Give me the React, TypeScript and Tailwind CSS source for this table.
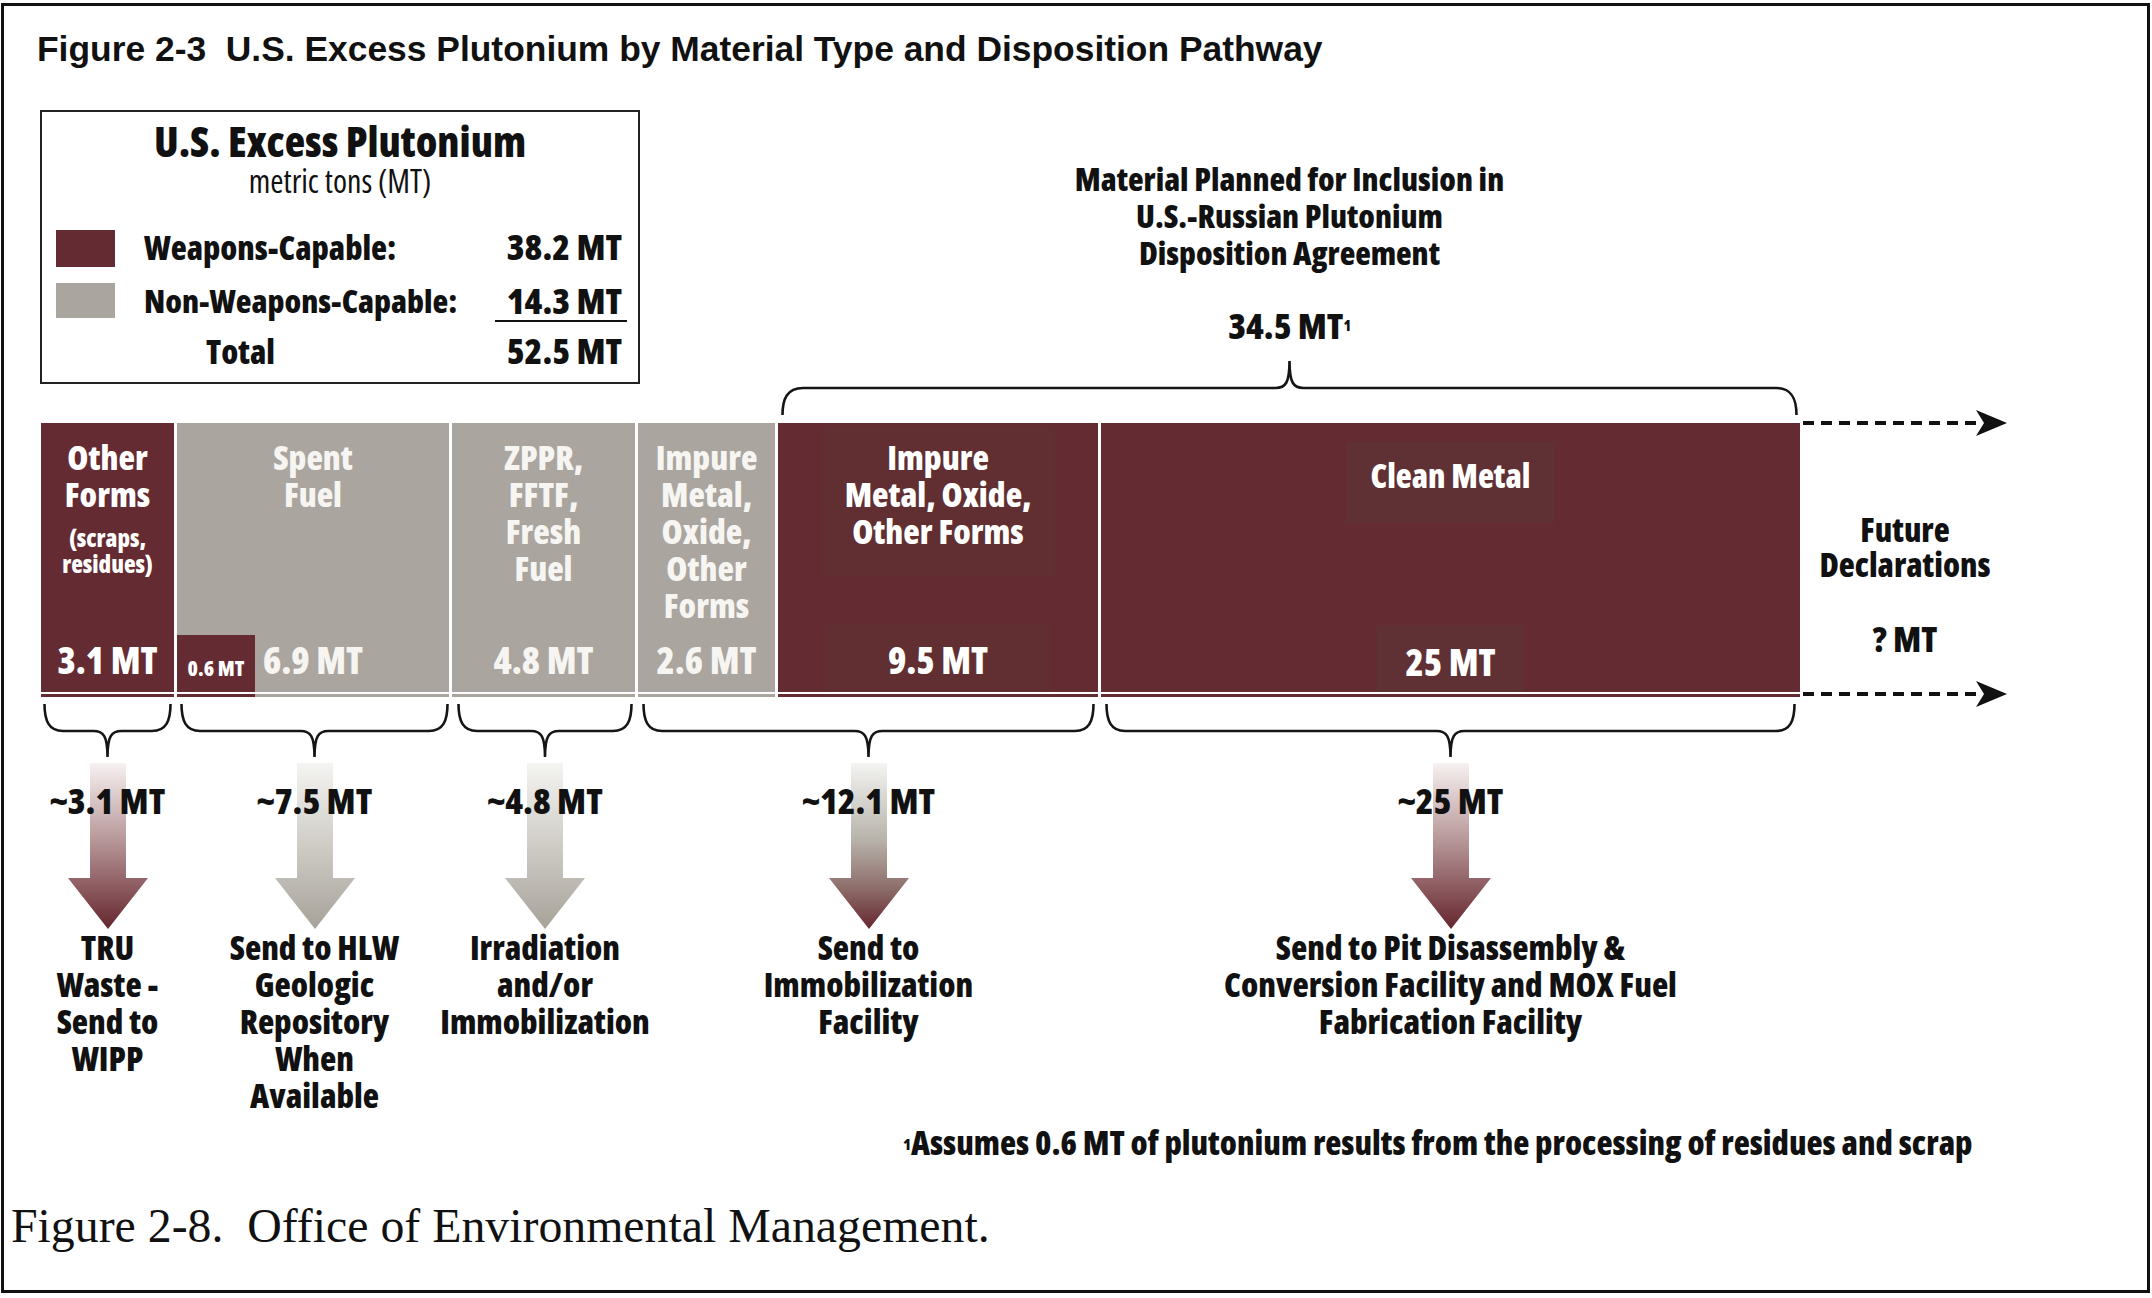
import React from "react";

const NF = "font-['Open_Sans','Noto_Sans',sans-serif] [font-stretch:75%]";
const N = "font-['Open_Sans','Noto_Sans',sans-serif] [font-stretch:75%] font-extrabold";

function BottomBrace({ w }: { w: number }) {
  const c = w / 2;
  const d = `M1.5,7 C1.5,24 6,34 20,34 L${c - 14},34 C${c - 4},34 ${c},39 ${c},60 C${c},39 ${c + 4},34 ${c + 14},34 L${w - 20},34 C${w - 6},34 ${w - 1.5},24 ${w - 1.5},7`;
  return (
    <svg width={w} height={66} className="block">
      <path d={d} fill="none" stroke="#151515" strokeWidth={2.6} />
    </svg>
  );
}

function TopBrace({ w }: { w: number }) {
  const c = w / 2;
  const d = `M1.5,58 C1.5,42 6,31 22,31 L${c - 14},31 C${c - 4},31 ${c},26 ${c},4 C${c},26 ${c + 4},31 ${c + 14},31 L${w - 22},31 C${w - 6},31 ${w - 1.5},42 ${w - 1.5},58`;
  return (
    <svg width={w} height={64} className="block">
      <path d={d} fill="none" stroke="#151515" strokeWidth={2.6} />
    </svg>
  );
}

function DownArrow({ id, stops }: { id: string; stops: [number, string][] }) {
  return (
    <svg width={80} height={166} className="block">
      <defs>
        <linearGradient id={id} x1="0" y1="0" x2="0" y2="1">
          {stops.map(([o, c]) => (
            <stop key={o} offset={o} stopColor={c} />
          ))}
        </linearGradient>
      </defs>
      <path d="M22,0 H58 V115 H80 L40,166 L0,115 H22 Z" fill={`url(#${id})`} />
    </svg>
  );
}

function DashArrow() {
  return (
    <svg width={204} height={30} className="block">
      <line x1={0} y1={15} x2={180} y2={15} stroke="#111" strokeWidth={4} strokeDasharray="11 7" />
      <path d="M204,15 L173,2 L181,15 L173,28 Z" fill="#111" />
    </svg>
  );
}

const maroonStops: [number, string][] = [
  [0, "#f7f1f1"],
  [0.45, "#b99a9c"],
  [1, "#66262e"],
];
const grayStops: [number, string][] = [
  [0, "#f4f4f2"],
  [0.5, "#cfccc6"],
  [1, "#a6a29a"],
];
const mixedStops: [number, string][] = [
  [0, "#f4f4f2"],
  [0.45, "#b9b5ad"],
  [0.75, "#8e6f6c"],
  [1, "#66262e"],
];

const columns = [
  { cls: "w-[129px]", w: 129, id: "a1", stops: maroonStops, amt: "~3.1 MT", lines: ["TRU", "Waste -", "Send to", "WIPP"] },
  { cls: "w-[269px] ml-[8px]", w: 269, id: "a2", stops: grayStops, amt: "~7.5 MT", lines: ["Send to HLW", "Geologic", "Repository", "When", "Available"] },
  { cls: "w-[176px] ml-[8px]", w: 176, id: "a3", stops: grayStops, amt: "~4.8 MT", lines: ["Irradiation", "and/or", "Immobilization"] },
  { cls: "w-[453px] ml-[9px]", w: 453, id: "a4", stops: mixedStops, amt: "~12.1 MT", lines: ["Send to", "Immobilization", "Facility"] },
  { cls: "w-[691px] ml-[10px]", w: 691, id: "a5", stops: maroonStops, amt: "~25 MT", lines: ["Send to Pit Disassembly &", "Conversion Facility and MOX Fuel", "Fabrication Facility"] },
];

export default function App() {
  return (
    <div className="w-[2152px] h-[1298px] bg-white overflow-hidden text-[#111]">
      <div className="ml-[1px] mt-[3px] w-[2149px] h-[1290px] border-[3px] border-[#111] flex flex-col">
        {/* Title */}
        <div className="h-[104px] pt-[23px] pl-[33px]">
          <div className="font-['Liberation_Sans',Arial,sans-serif] font-bold text-[35.4px] leading-[40px] whitespace-nowrap">
            Figure 2-3&nbsp; U.S. Excess Plutonium by Material Type and Disposition Pathway
          </div>
        </div>

        {/* Legend + top annotation */}
        <div className="flex h-[313px]">
          <div className="ml-[36px] w-[600px] h-[274px] border-2 border-[#222] flex flex-col">
            <div className={`${N} text-[42px] leading-[44px] text-center pt-[7px]`}>U.S. Excess Plutonium</div>
            <div className={`${NF} font-normal text-[32px] leading-[34px] text-center mt-[1px]`}>metric tons (MT)</div>
            <div className={`${N} mt-[24px] flex flex-col text-[33px]`}>
              <div className="flex items-center h-[52px]">
                <div className="shrink-0 ml-[14px] w-[59px] h-[37px] bg-[#652b32]" />
                <div className="ml-[29px] leading-[38px] whitespace-nowrap">Weapons-Capable:</div>
                <div className="shrink-0 ml-auto mr-[11px] w-[132px] text-right pr-[5px] text-[36px] leading-[38px] whitespace-nowrap border-b-2 border-transparent">38.2 MT</div>
              </div>
              <div className="flex items-center h-[52px]">
                <div className="shrink-0 ml-[14px] w-[59px] h-[35px] bg-[#aaa59f]" />
                <div className="ml-[29px] text-[32.4px] leading-[38px] whitespace-nowrap">Non-Weapons-Capable:</div>
                <div className="shrink-0 ml-auto mr-[11px] w-[132px] text-right pr-[5px] text-[36px] leading-[38px] whitespace-nowrap border-b-2 border-[#111] translate-y-[2px]">14.3 MT</div>
              </div>
              <div className="flex items-center h-[52px]">
                <div className="ml-[164px] leading-[38px]">Total</div>
                <div className="shrink-0 ml-auto mr-[11px] w-[132px] text-right pr-[5px] text-[36px] leading-[38px] whitespace-nowrap border-b-2 border-transparent">52.5 MT</div>
              </div>
            </div>
          </div>

          <div className="ml-[141px] w-[1017px] flex flex-col items-center">
            <div className={`${N} text-[32.2px] leading-[37px] text-center pt-[50px] whitespace-nowrap`}>
              <div>Material Planned for Inclusion in</div>
              <div>U.S.-Russian Plutonium</div>
              <div>Disposition Agreement</div>
            </div>
            <div className={`${N} text-[36px] leading-[37px] mt-[36px] whitespace-nowrap`}>
              34.5 MT<sup className="text-[15px] relative -top-[8px]">1</sup>
            </div>
            <div className="mt-[13px]">
              <TopBrace w={1017} />
            </div>
          </div>
        </div>

        {/* Bar */}
        <div className={`${N} flex gap-[3px] h-[274px] pl-[37px]`}>
          {/* Other Forms */}
          <div className="w-[133px] flex flex-col">
            <div className="h-[269px] bg-[#652b32] flex flex-col items-center pt-[16px] pb-[12px] text-white text-center">
              <div className="text-[34px] leading-[37px]">Other</div>
              <div className="text-[34px] leading-[37px]">Forms</div>
              <div className="text-[24px] leading-[26px] mt-[12px]">(scraps,</div>
              <div className="text-[24px] leading-[26px]">residues)</div>
              <div className="mt-auto text-[37px] leading-[40px]">3.1 MT</div>
            </div>
            <div className="h-[2px] bg-white" />
            <div className="h-[3px] bg-[#652b32]" />
          </div>

          {/* Spent Fuel */}
          <div className="w-[272px] flex flex-col">
            <div className="relative h-[269px] bg-[#aaa59f] flex flex-col items-center pt-[16px] pb-[12px] text-[#f6f5f2] text-center">
              <div className="text-[34px] leading-[37px]">Spent</div>
              <div className="text-[34px] leading-[37px]">Fuel</div>
              <div className="mt-auto text-[37px] leading-[40px]">6.9 MT</div>
              <div className="absolute left-0 bottom-0 w-[78px] h-[57px] bg-[#652b32] flex items-center justify-center pt-[8px]">
                <span className="text-[21px] leading-[22px] text-white whitespace-nowrap">0.6 MT</span>
              </div>
            </div>
            <div className="h-[2px] bg-white" />
            <div className="h-[3px] flex">
              <div className="w-[78px] bg-[#652b32]" />
              <div className="flex-1 bg-[#aaa59f]" />
            </div>
          </div>

          {/* ZPPR */}
          <div className="w-[183px] flex flex-col">
            <div className="h-[269px] bg-[#aaa59f] flex flex-col items-center pt-[16px] pb-[12px] text-[#f6f5f2] text-center">
              <div className="text-[34px] leading-[37px]">ZPPR,</div>
              <div className="text-[34px] leading-[37px]">FFTF,</div>
              <div className="text-[34px] leading-[37px]">Fresh</div>
              <div className="text-[34px] leading-[37px]">Fuel</div>
              <div className="mt-auto text-[37px] leading-[40px]">4.8 MT</div>
            </div>
            <div className="h-[2px] bg-white" />
            <div className="h-[3px] bg-[#aaa59f]" />
          </div>

          {/* Impure gray */}
          <div className="w-[137px] flex flex-col">
            <div className="h-[269px] bg-[#aaa59f] flex flex-col items-center pt-[16px] pb-[12px] text-[#f6f5f2] text-center">
              <div className="text-[34px] leading-[37px]">Impure</div>
              <div className="text-[34px] leading-[37px]">Metal,</div>
              <div className="text-[34px] leading-[37px]">Oxide,</div>
              <div className="text-[34px] leading-[37px]">Other</div>
              <div className="text-[34px] leading-[37px]">Forms</div>
              <div className="mt-auto text-[37px] leading-[40px]">2.6 MT</div>
            </div>
            <div className="h-[2px] bg-white" />
            <div className="h-[3px] bg-[#aaa59f]" />
          </div>

          {/* Impure maroon */}
          <div className="w-[320px] flex flex-col">
            <div className="h-[269px] bg-[#652b32] flex flex-col items-center pt-[4px] text-white text-center">
              <div className="w-[232px] h-[150px] bg-[#612f31] pt-[12px] whitespace-nowrap">
                <div className="text-[34px] leading-[37px]">Impure</div>
                <div className="text-[34px] leading-[37px]">Metal, Oxide,</div>
                <div className="text-[34px] leading-[37px]">Other Forms</div>
              </div>
              <div className="mt-auto w-[226px] h-[67px] bg-[#612f31] pt-[15px]">
                <div className="text-[37px] leading-[40px]">9.5 MT</div>
              </div>
            </div>
            <div className="h-[2px] bg-white" />
            <div className="h-[3px] bg-[#652b32]" />
          </div>

          {/* Clean Metal */}
          <div className="w-[699px] flex flex-col">
            <div className="h-[269px] bg-[#652b32] flex flex-col items-center pt-[19px] text-white text-center">
              <div className="w-[209px] h-[81px] bg-[#5f3134] pt-[15px]">
                <div className="text-[33px] leading-[37px]">Clean Metal</div>
              </div>
              <div className="mt-auto w-[147px] h-[67px] bg-[#5f3134] pt-[17px]">
                <div className="text-[37px] leading-[40px]">25 MT</div>
              </div>
            </div>
            <div className="h-[2px] bg-white" />
            <div className="h-[3px] bg-[#652b32]" />
          </div>

          {/* Future declarations */}
          <div className="w-[204px] h-[301px] -mt-[15px] -mb-[12px] flex flex-col items-center text-[#111]">
            <DashArrow />
            <div className="text-[33px] leading-[35px] text-center pt-[74px]">
              <div>Future</div>
              <div>Declarations</div>
            </div>
            <div className="text-[35px] leading-[37px] mt-[38px]">? MT</div>
            <div className="mt-auto">
              <DashArrow />
            </div>
          </div>
        </div>

        {/* Braces, arrows, destinations */}
        <div className={`${N} flex h-[426px] pl-[39px]`}>
          {columns.map((col) => (
            <div key={col.id} className={`${col.cls} flex flex-col items-center`}>
              <BottomBrace w={col.w} />
              <div className="relative w-[80px] h-[166px]">
                <DownArrow id={col.id} stops={col.stops} />
                <div className="absolute left-1/2 top-[19px] -translate-x-1/2 text-[36px] leading-[37px] whitespace-nowrap">
                  {col.amt}
                </div>
              </div>
              <div className="text-[33.5px] leading-[37px] text-center whitespace-nowrap">
                {col.lines.map((l) => (
                  <div key={l}>{l}</div>
                ))}
              </div>
            </div>
          ))}
        </div>

        {/* Footnote */}
        <div className={`${N} h-[40px] pl-[899px] text-[33.2px] leading-[40px] whitespace-nowrap`}>
          <sup className="text-[16px] relative -top-[5px]">1</sup>Assumes 0.6 MT of plutonium results from the processing of residues and scrap
        </div>

        {/* Caption */}
        <div className="mt-[38px] pl-[7px] font-['Liberation_Serif','Times_New_Roman',serif] text-[47.8px] leading-[50px] whitespace-nowrap">
          Figure 2-8.&nbsp; Office of Environmental Management.
        </div>
      </div>
    </div>
  );
}
